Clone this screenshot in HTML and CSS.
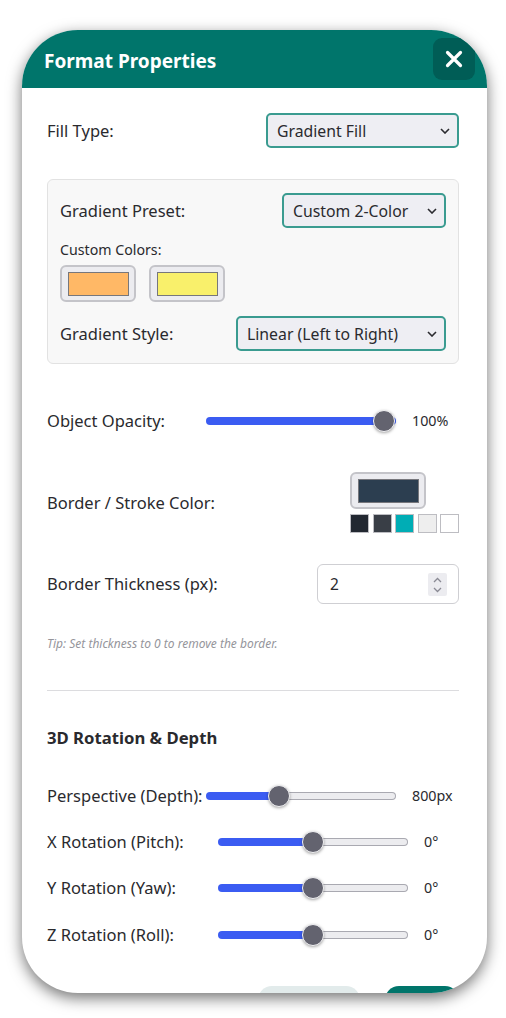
FILE: index.html
```html
<!DOCTYPE html>
<html lang="en">
<head>
<meta charset="utf-8">
<title>Format Properties</title>
<link rel="stylesheet" href="styles.css">
</head>
<body>
<div class="modal">
  <header class="modal-header">
    <h2 class="modal-title">Format Properties</h2>
    <button class="close-btn" aria-label="Close">
      <svg width="18" height="18" viewBox="0 0 18 18"><path d="M2.5 2.5 L15.5 15.5 M15.5 2.5 L2.5 15.5" stroke="#fff" stroke-width="3.2" stroke-linecap="round"/></svg>
    </button>
  </header>
  <div class="modal-body">
    <div class="row">
      <label class="lbl">Fill Type:</label>
      <span class="sel-wrap">
        <select class="sel sel-fill"><option>Gradient Fill</option><option>Solid Fill</option><option>No Fill</option></select>
        <svg class="chev" width="10" height="6" viewBox="0 0 10 6"><path d="M1 1 L5 5 L9 1" fill="none" stroke="#2b2b30" stroke-width="1.6"/></svg>
      </span>
    </div>

    <div class="panel">
      <div class="row">
        <label class="lbl">Gradient Preset:</label>
        <span class="sel-wrap">
          <select class="sel sel-preset"><option>Custom 2-Color</option></select>
          <svg class="chev" width="10" height="6" viewBox="0 0 10 6"><path d="M1 1 L5 5 L9 1" fill="none" stroke="#2b2b30" stroke-width="1.6"/></svg>
        </span>
      </div>
      <div class="small-lbl">Custom Colors:</div>
      <div class="picker-pair">
        <button class="picker" aria-label="Start color"><span class="picker-fill" style="background:#ffb866"></span></button>
        <button class="picker" aria-label="End color"><span class="picker-fill" style="background:#f9f06b"></span></button>
      </div>
      <div class="row row-style">
        <label class="lbl">Gradient Style:</label>
        <span class="sel-wrap">
          <select class="sel sel-style"><option>Linear (Left to Right)</option></select>
          <svg class="chev" width="10" height="6" viewBox="0 0 10 6"><path d="M1 1 L5 5 L9 1" fill="none" stroke="#2b2b30" stroke-width="1.6"/></svg>
        </span>
      </div>
    </div>

    <div class="row slider-row row-opacity">
      <label class="lbl">Object Opacity:</label>
      <input type="range" class="rng" min="0" max="100" value="100" style="--p:100%">
      <span class="val">100%</span>
    </div>

    <div class="row row-stroke">
      <label class="lbl">Border / Stroke Color:</label>
      <div class="stroke-col">
        <button class="picker picker-stroke" aria-label="Stroke color"><span class="picker-fill" style="background:#2c3e50"></span></button>
        <div class="mini-swatches">
          <span class="mini" style="background:#222831"></span>
          <span class="mini" style="background:#393e46"></span>
          <span class="mini" style="background:#00adb5"></span>
          <span class="mini" style="background:#eeeeee"></span>
          <span class="mini" style="background:#ffffff"></span>
        </div>
      </div>
    </div>

    <div class="row row-thick">
      <label class="lbl">Border Thickness (px):</label>
      <div class="num-wrap">
        <input type="number" class="num" value="2" min="0">
        <span class="spin">
          <svg width="11" height="20" viewBox="0 0 11 20"><path d="M2 7 L5.5 3.5 L9 7 M2 13 L5.5 16.5 L9 13" fill="none" stroke="#8a8a94" stroke-width="1.3"/></svg>
        </span>
      </div>
    </div>

    <p class="tip">Tip: Set thickness to 0 to remove the border.</p>

    <hr class="divider">

    <h3 class="section-title">3D Rotation &amp; Depth</h3>

    <div class="row slider-row row-persp">
      <label class="lbl">Perspective (Depth):</label>
      <input type="range" class="rng" min="100" max="2000" value="800" style="--p:73px">
      <span class="val">800px</span>
    </div>
    <div class="row slider-row row-rot">
      <label class="lbl">X Rotation (Pitch):</label>
      <input type="range" class="rng" min="-180" max="180" value="0" style="--p:95px">
      <span class="val val-deg">0°</span>
    </div>
    <div class="row slider-row row-rot">
      <label class="lbl">Y Rotation (Yaw):</label>
      <input type="range" class="rng" min="-180" max="180" value="0" style="--p:95px">
      <span class="val val-deg">0°</span>
    </div>
    <div class="row slider-row row-rot row-last">
      <label class="lbl">Z Rotation (Roll):</label>
      <input type="range" class="rng" min="-180" max="180" value="0" style="--p:95px">
      <span class="val val-deg">0°</span>
    </div>

    <div class="modal-footer">
      <button class="btn btn-cancel" aria-label="Cancel"></button>
      <button class="btn btn-apply" aria-label="Apply"></button>
    </div>
  </div>
</div>
</body>
</html>
```

FILE: styles.css
```css
* { box-sizing: border-box; }

html, body {
  margin: 0;
  padding: 0;
  background: #ffffff;
}

body {
  font-family: "Noto Sans", "Open Sans", sans-serif;
  color: #2a2a2e;
  width: 506px;
  height: 1018px;
  overflow: hidden;
}

.modal {
  margin: 30px 0 0 22px;
  width: 465px;
  height: 963px;
  border-radius: 56px;
  overflow: hidden;
  background: #ffffff;
  box-shadow: 0 5px 15px rgba(0, 0, 0, 0.55);
  display: flex;
  flex-direction: column;
}

.modal-header {
  height: 58px;
  flex: none;
  background: #00756b;
  display: flex;
  align-items: center;
  justify-content: space-between;
  padding: 0 12px 0 22px;
}

.modal-title {
  margin: 0;
  color: #ffffff;
  font-size: 19px;
  font-weight: 700;
  line-height: 24px;
  margin-top: 4px;
}

.close-btn {
  width: 42px;
  height: 42px;
  border: none;
  border-radius: 9px;
  background: #005d56;
  display: flex;
  align-items: center;
  justify-content: center;
  padding: 0;
}

.modal-body {
  padding: 25px 28px 0 25px;
  display: flex;
  flex-direction: column;
}

.row {
  display: flex;
  align-items: center;
  justify-content: space-between;
}

.lbl {
  font-size: 16.5px;
  line-height: 22px;
  white-space: nowrap;
}

.slider-row .lbl {
  flex: 1;
  min-width: 0;
}

.sel-wrap {
  position: relative;
  display: flex;
}

.sel {
  -webkit-appearance: none;
  appearance: none;
  height: 35px;
  border: 2px solid #3a9b90;
  border-radius: 5px;
  background-color: #eeeef3;
  font-family: "Noto Sans", "Open Sans", sans-serif;
  font-size: 15.8px;
  color: #2a2a2e;
  padding: 0 24px 0 9px;
}

.chev {
  position: absolute;
  right: 9px;
  top: 15px;
  pointer-events: none;
}

.sel-fill { width: 193px; }
.sel-preset { width: 164px; }
.sel-style { width: 210px; }

.panel {
  margin-top: 31px;
  background: #f8f8f8;
  border: 1px solid #e2e2e2;
  border-radius: 6px;
  padding: 13px 12px 12px 12px;
}

.small-lbl {
  margin-top: 12px;
  font-size: 14.2px;
  line-height: 20px;
}

.picker-pair {
  margin-top: 5px;
  display: flex;
  gap: 13px;
}

.picker {
  width: 76px;
  height: 37px;
  border: 2px solid #c4c4c9;
  border-radius: 6px;
  background: #ececf0;
  padding: 5px 5px 4px 6px;
  display: flex;
}

.picker-fill {
  flex: 1;
  border: 1px solid #77777c;
}

.row-style { margin-top: 14px; }

.slider-row { height: 22px; }

.row-opacity { margin-top: 46px; }

.rng {
  -webkit-appearance: none;
  appearance: none;
  flex: none;
  width: 190px;
  height: 22px;
  margin: 0;
  background: transparent;
}

.rng::-webkit-slider-runnable-track {
  height: 8px;
  border-radius: 4px;
  border: 1px solid transparent;
  background:
    linear-gradient(to right, #3b5cf2 var(--p), #ececef var(--p)) padding-box,
    linear-gradient(to right, #3b5cf2 var(--p), #a9a9b1 var(--p)) border-box;
}

.rng::-webkit-slider-thumb {
  -webkit-appearance: none;
  appearance: none;
  width: 22px;
  height: 22px;
  border-radius: 50%;
  background: #63636f;
  border: 1px solid #f2f2f4;
  box-shadow: 0 1px 3px rgba(0, 0, 0, 0.35);
  margin-top: -8px;
}

.val {
  flex: none;
  width: 47px;
  margin-left: 16px;
  font-size: 14.3px;
  line-height: 20px;
}

.val-deg { width: 35px; }

.row-stroke { margin-top: 40px; }

.stroke-col {
  width: 109px;
  display: flex;
  flex-direction: column;
  align-items: flex-start;
}

.picker-stroke {
  width: 76px;
  height: 37px;
  padding: 5px 5px 4px 6px;
}

.mini-swatches {
  margin-top: 5px;
  display: flex;
  gap: 3.5px;
}

.mini {
  width: 19px;
  height: 19px;
  border: 1.5px solid #bdbdc2;
}

.row-thick { margin-top: 31px; }

.num-wrap {
  position: relative;
  width: 142px;
  height: 40px;
}

.num {
  width: 100%;
  height: 100%;
  border: 1px solid #cfcfd3;
  border-radius: 6px;
  background: #ffffff;
  font-family: "Noto Sans", "Open Sans", sans-serif;
  font-size: 15.5px;
  color: #2a2a2e;
  padding: 0 12px;
  -moz-appearance: textfield;
}

.num::-webkit-inner-spin-button,
.num::-webkit-outer-spin-button {
  -webkit-appearance: none;
  margin: 0;
}

.spin {
  position: absolute;
  right: 12px;
  top: 9px;
  width: 19px;
  height: 23px;
  background: #ececf0;
  border-radius: 2px;
  display: flex;
  align-items: center;
  justify-content: center;
}

.tip {
  margin: 32px 0 0 0;
  font-size: 12px;
  line-height: 16px;
  font-style: italic;
  color: #95959b;
}

.divider {
  margin: 38px 0 0 0;
  border: none;
  border-top: 1px solid #dcdcdf;
  height: 0;
}

.section-title {
  margin: 35px 0 0 0;
  font-size: 16.7px;
  font-weight: 700;
  line-height: 24px;
}

.row-persp { margin-top: 35px; }
.row-rot { margin-top: 24px; }
.row-last { margin-top: 25px; }

.modal-footer {
  margin-top: 40px;
  display: flex;
  justify-content: flex-end;
  gap: 25px;
}

.btn {
  height: 40px;
  border: none;
  border-radius: 14px;
}

.btn-cancel {
  width: 102px;
  background: #e2ebeb;
}

.btn-apply {
  width: 74px;
  background: #00756b;
}
```
